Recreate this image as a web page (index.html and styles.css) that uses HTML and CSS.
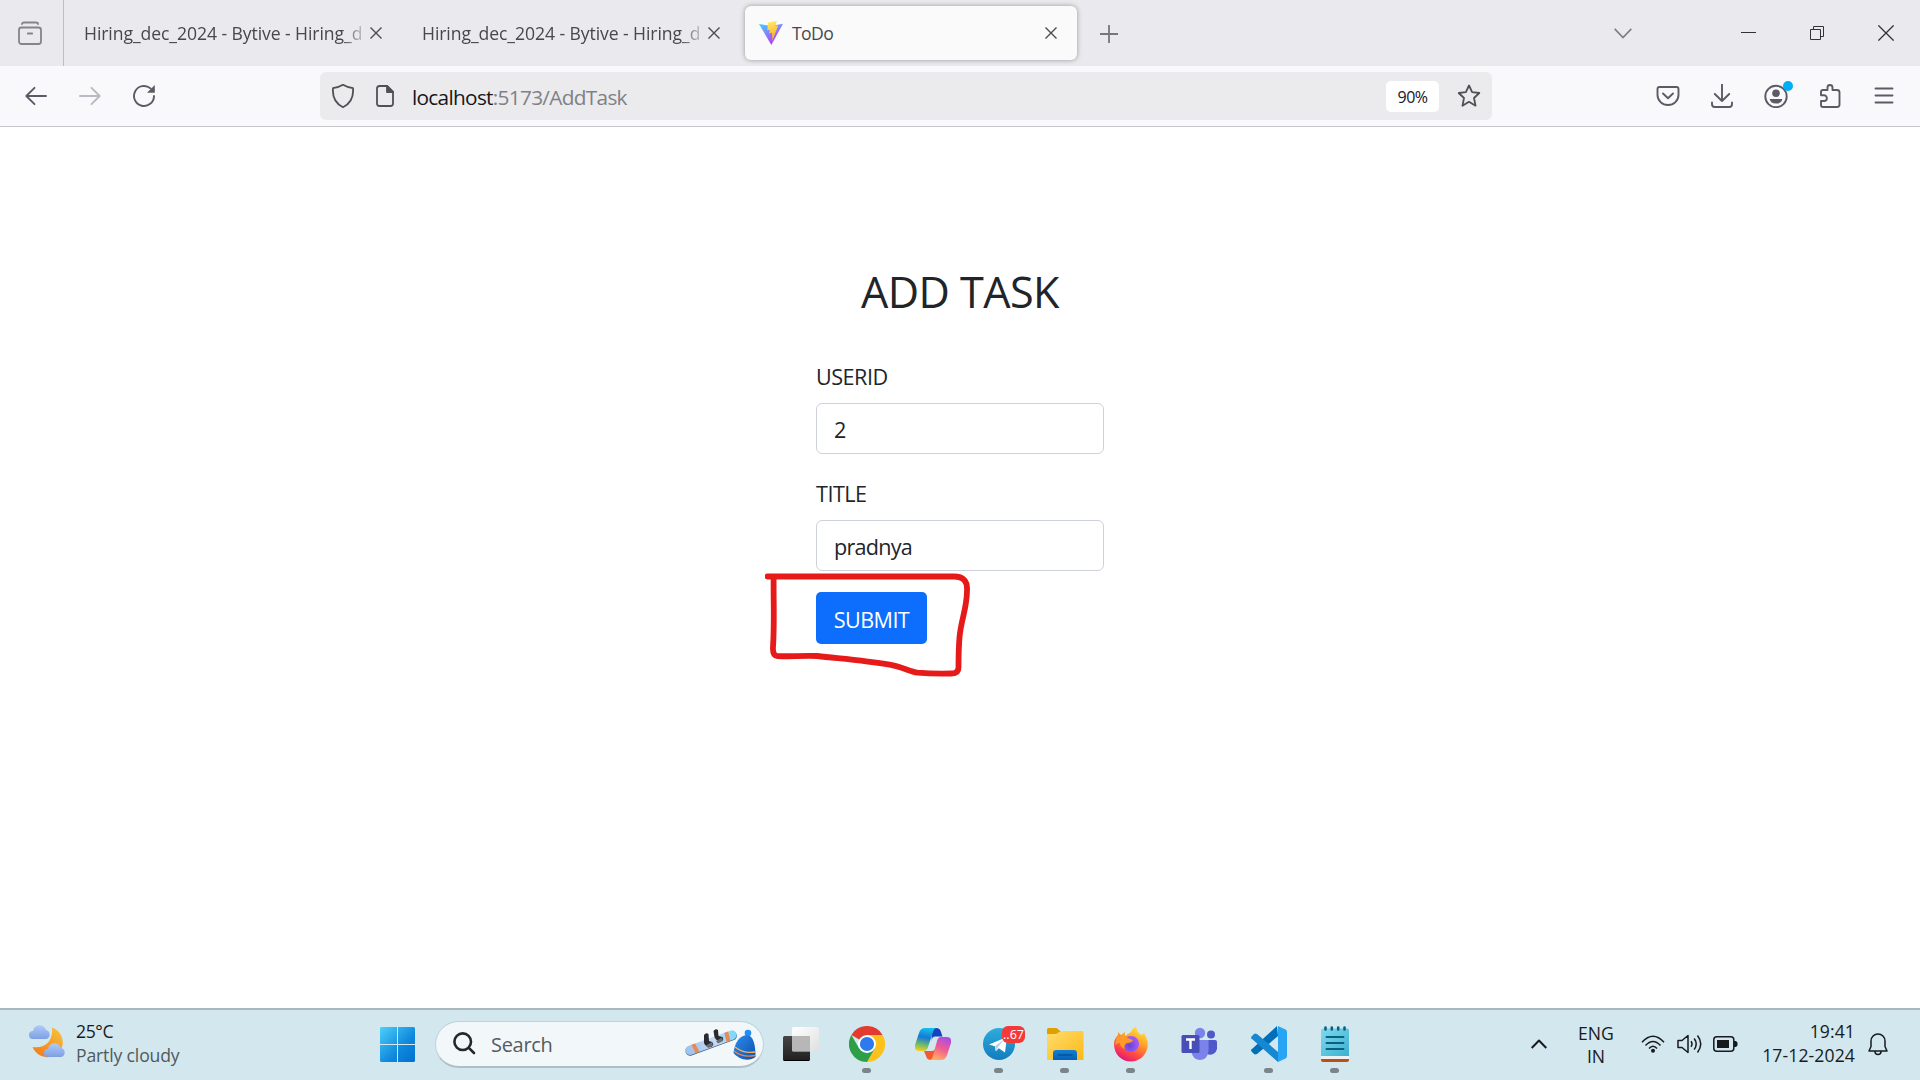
FILE: index.html
```html
<!DOCTYPE html>
<html lang="en">
<head>
<meta charset="utf-8">
<title>ToDo</title>
<link rel="stylesheet" href="styles.css">
</head>
<body>
<div class="desktop">
  <header class="tabstrip">
    <div class="recent">
      <svg width="24" height="24" viewBox="0 0 24 24" fill="none" stroke="#85848c" stroke-width="1.8" stroke-linecap="round"><path d="M4 3q0-1.500 2-1.500h12q2 0 2 1.500"/><rect x="1" y="6.500" width="22" height="16.500" rx="2.500"/><path d="M9.800 12.500h4.400"/></svg>
    </div>
    <div class="tab first">
      <span class="tab-title">Hiring_dec_2024 - Bytive - Hiring_d</span>
      <svg class="x" viewBox="0 0 12 12"><path d="M.5.5l11 11M11.500.5l-11 11"/></svg>
    </div>
    <div class="tab second">
      <span class="tab-title">Hiring_dec_2024 - Bytive - Hiring_d</span>
      <svg class="x" viewBox="0 0 12 12"><path d="M.5.5l11 11M11.500.5l-11 11"/></svg>
    </div>
    <div class="tab active">
      <svg width="24" height="24" viewBox="0 0 24 24">
        <defs>
          <linearGradient id="va" x1="0" y1="0" x2=".6" y2="1"><stop offset="0" stop-color="#41d1ff"/><stop offset="1" stop-color="#bd34fe"/></linearGradient>
          <linearGradient id="vb" x1=".4" y1="0" x2=".6" y2="1"><stop offset="0" stop-color="#ffea60"/><stop offset="1" stop-color="#ffa02c"/></linearGradient>
        </defs>
        <path fill="url(#va)" d="M0 3l12.300 2L24 2.800 12.300 24z"/>
        <path fill="url(#vb)" d="M9 1.500L18 0l-1.800 5 3-.4-5.800 15.200-.4-8-3 .6 1-3.600-2.700.5z"/>
      </svg>
      <span class="tab-title">ToDo</span>
      <svg class="x" viewBox="0 0 12 12"><path d="M.5.5l11 11M11.500.5l-11 11"/></svg>
    </div>
    <svg class="plus" width="18" height="18" viewBox="0 0 18 18"><path d="M9 0v18M0 9h18"/></svg>
    <div class="window-controls">
      <svg width="18" height="11" viewBox="0 0 18 11" stroke="#807f86" stroke-width="1.700"><path d="M.7.800L9 9.500 17.300.800"/></svg>
      <svg class="minimize" width="15" height="16" viewBox="0 0 15 16"><path d="M0 7.500h15"/></svg>
      <svg class="restore" width="14" height="14" viewBox="0 0 14 14"><path d="M.5 3.500h10v10H.5zM3.500 3V.5h10v10H11"/></svg>
      <svg width="16" height="16" viewBox="0 0 16 16" stroke-width="1.300"><path d="M.4.4l15.200 15.200M15.600.4L.4 15.600"/></svg>
    </div>
  </header>

  <nav class="toolbar">
    <div class="nav-buttons">
      <svg viewBox="0 0 24 24"><path d="M22 12H2.500M10.500 3.800L2.300 12l8.200 8.200"/></svg>
      <svg class="disabled" viewBox="0 0 24 24"><path d="M2 12h19.500M13.500 3.800l8.200 8.200-8.200 8.200"/></svg>
      <svg viewBox="0 0 24 24"><path d="M22 12a10 10 0 1 1-3.500-7.600"/><path fill="#5b5b66" stroke="none" d="M22.800 1v7.800H15z"/></svg>
    </div>
    <div class="urlbar">
      <svg width="24" height="26" viewBox="0 0 24 26"><path d="M12 1.800c3 1.800 6.500 3 10 3.300.6 7-1.200 14.800-10 19.100C3.200 19.900 1.400 12.100 2 5.100c3.500-.3 7-1.500 10-3.300z"/></svg>
      <svg class="page" width="18" height="22" viewBox="0 0 18 22"><path d="M3.500 1H11l6 6v11.500q0 2.500-2.500 2.500h-11Q1 21 1 18.500v-15Q1 1 3.500 1z"/><path fill="#505055" d="M11 1v6h6z"/></svg>
      <span class="url">localhost<span class="url-path">:5173/AddTask</span></span>
      <span class="zoom-level">90%</span>
      <svg class="star" width="24" height="24" viewBox="0 0 24 24"><path d="M12 1.500l3.100 6.700 7.200.8-5.300 5 1.500 7.700-6.500-3.900-6.500 3.900L7 14 1.700 9l7.200-.8z"/></svg>
    </div>
    <div class="actions">
      <svg viewBox="0 0 24 24"><path d="M3.500 3h17q2 0 2 2v6a10.500 10 0 0 1-21 0V5q0-2 2-2z"/><path d="M7 9.500l5 4.800 5-4.800"/></svg>
      <svg viewBox="0 0 24 24"><path d="M12 .5v16.500M4.800 10l7.200 7 7.200-7M2 18.500v1.800q0 2.700 2.700 2.700h14.600q2.700 0 2.700-2.700v-1.800"/></svg>
      <span class="account">
        <svg viewBox="0 0 24 24"><circle cx="12" cy="12.500" r="10.700"/><circle cx="12" cy="9.300" r="3.800" fill="#5b5b66" stroke="none"/><path d="M5.700 15h12.600q-.8 4.600-6.300 4.600T5.700 15z" fill="#5b5b66" stroke="none"/></svg>
        <i class="dot"></i>
      </span>
      <svg viewBox="0 0 24 24"><path d="M9.500 6V3.500a2.500 2.500 0 0 1 5 0V6H19q2.500 0 2.500 2.500v12Q21.500 23 19 23H5q-2 0-2-2v-4h3a2.800 2.800 0 0 0 0-5.700H3V8q0-2 2-2z"/></svg>
      <svg viewBox="0 0 24 24"><path d="M3.500 4.500h17M3.500 11.500h17M3.500 18.500h17"/></svg>
    </div>
  </nav>

  <main class="page-body">
    <h1 class="heading">ADD TASK</h1>
    <form class="form">
      <label class="label userid" for="userid">USERID</label>
      <input class="field" id="userid" value="2">
      <label class="label title" for="title">TITLE</label>
      <input class="field" id="title" value="pradnya">
      <button class="submit" type="button">SUBMIT</button>
    </form>
    <svg class="marker" width="210" height="110" viewBox="765 570 210 110"><path d="M767.500 576.500H954q14 0 13 14c0 18-6 29-7.500 47-1 12-1 22-1 30q0 6-7 6c-13 .3-24 0-34-.8-8-1.400-16-6-28-8-24-4.300-48-6-72-8.700-12-.7-28 .6-40 .2q-5-.4-4.500-9c1.500-24 .5-40 .6-69"/></svg>
  </main>

  <footer class="taskbar">
    <div class="weather">
      <svg width="36" height="34" viewBox="0 0 36 34">
        <defs>
          <linearGradient id="moon" x1="1" y1="0" x2=".3" y2="1"><stop offset="0" stop-color="#f8c63d"/><stop offset="1" stop-color="#f1801d"/></linearGradient>
          <linearGradient id="cloud" x1="0" y1="0" x2="0" y2="1"><stop offset="0" stop-color="#b0cbf8"/><stop offset="1" stop-color="#7d9fe5"/></linearGradient>
        </defs>
        <path fill="url(#moon)" d="M23 2.500c9 3 13 13 9.500 21C28 34 10 36.500 3.500 22c12 2 21-6 19.500-19.500z"/>
        <path fill="url(#cloud)" d="M4 14a4 4 0 0 1 0-8c1-7 11-8 13-1a4.600 4.600 0 0 1 0 9z"/>
        <path fill="url(#cloud)" d="M19 32a4 4 0 0 1 0-8c1-7 11-8 13-1a4.600 4.600 0 0 1 0 9z"/>
      </svg>
      <div class="weather-text"><span class="temp">25°C</span><span class="sky">Partly cloudy</span></div>
    </div>

    <svg class="start" width="35" height="35" viewBox="0 0 35 35">
      <defs><linearGradient id="win" gradientUnits="userSpaceOnUse" x1="0" y1="0" x2="35" y2="35"><stop offset="0" stop-color="#4bd0fc"/><stop offset=".6" stop-color="#1088dc"/><stop offset="1" stop-color="#0070d0"/></linearGradient></defs>
      <path fill="url(#win)" d="M1.500 0H17v17H0V1.500Q0 0 1.500 0zM18 0h15.500Q35 0 35 1.500V17H18zM0 18h17v17H1.500Q0 35 0 33.500zM18 18h17v15.500q0 1.500-1.500 1.500H18z"/>
    </svg>

    <div class="search">
      <svg width="23" height="23" viewBox="0 0 23 23" fill="none" stroke="#252729" stroke-width="2.600" stroke-linecap="round"><circle cx="9.700" cy="9.700" r="8.300"/><path d="M15.800 15.800l5.200 5.200"/></svg>
      <span class="search-text">Search</span>
      <svg class="winter" width="72" height="34" viewBox="0 0 72 34">
        <defs>
          <linearGradient id="hat" x1="0" y1="0" x2="1" y2="1"><stop offset="0" stop-color="#2f8df0"/><stop offset="1" stop-color="#0b50ad"/></linearGradient>
          <linearGradient id="board" x1="0" y1="0" x2="1" y2="0"><stop offset="0" stop-color="#9bc0ee"/><stop offset=".6" stop-color="#c7d9f6"/><stop offset="1" stop-color="#78d7fb"/></linearGradient>
        </defs>
        <g transform="rotate(-20 27 16)">
          <rect x="0" y="12" width="54" height="9" rx="4.500" fill="#35577e"/>
          <rect x="0" y="11" width="54" height="9.300" rx="4.600" fill="url(#board)"/>
          <path fill="#e98b50" d="M8 11h4l1 9.300H9zM43 11h4l-1 9.300h-4z"/>
        </g>
        <path fill="#282a2e" d="M20 8q2-3 4.500-1l.5 7 3 1q3 3-1 5-5 1-7-4zM29.500 4q2-3 4.500-1l.5 6 4 1q2 3-1 4-5 1-7-4z"/>
        <path fill="#6b6e74" d="M22 18.500l6-3.500 1 3.500-5 2.500zM32 14l6-3.500 1 3.500-5 2.500z"/>
        <circle cx="64" cy="6" r="3.300" fill="#218df5"/>
        <path fill="url(#hat)" d="M49.500 26c1-9 5-17 13-18 7 0 9 10 9 22-8 6-18 1-22-4z"/>
        <path fill="none" stroke="#f4b65c" stroke-width="1.300" d="M51 20q9 7 20 5"/>
        <path fill="none" stroke="#ea8450" stroke-width="1.300" d="M50 24q9 7 21 4.500"/>
      </svg>
    </div>

    <div class="apps">
      <div class="app"><svg width="36" height="36" viewBox="0 0 36 36">
        <defs><linearGradient id="tv" x1="0" y1="0" x2="0" y2="1"><stop offset="0" stop-color="#454545"/><stop offset="1" stop-color="#202020"/></linearGradient><linearGradient id="tw" x1="0" y1="0" x2="1" y2="1"><stop offset="0" stop-color="#fff"/><stop offset="1" stop-color="#dedfe0"/></linearGradient></defs>
        <rect x="0" y="10" width="27" height="25" rx="1.500" fill="url(#tv)"/><path d="M1 34.500h25" stroke="#000"/><rect x="9" y="1" width="27" height="24.500" rx="1.500" fill="url(#tw)"/><path fill="#b7b7b7" d="M9 10h18v15H9z"/></svg></div>
      <div class="app running"><svg width="36" height="36" viewBox="0 0 36 36">
        <path fill="#e33b2e" d="M18 18L2.400 9A18 18 0 0 1 33.600 9H18z"/>
        <path fill="#fcc11b" d="M18 9h15.600A18 18 0 0 1 18 36l7.800-13.500z"/>
        <path fill="#2c9f48" d="M10.200 22.500L2.400 9A18 18 0 0 0 18 36l7.800-13.500z"/>
        <circle cx="18" cy="18" r="9" fill="#fff"/><circle cx="18" cy="18" r="7.100" fill="#2f79ef"/></svg></div>
      <div class="app"><svg width="36" height="36" viewBox="0 0 36 36">
        <defs>
          <linearGradient id="ca" x1=".5" y1="0" x2=".3" y2="1"><stop offset="0" stop-color="#18bde9"/><stop offset=".4" stop-color="#1479d8"/><stop offset=".75" stop-color="#75bd65"/><stop offset="1" stop-color="#f3cf16"/></linearGradient>
          <linearGradient id="cb" x1=".8" y1="0" x2=".4" y2="1"><stop offset="0" stop-color="#a64be8"/><stop offset=".5" stop-color="#ef5b94"/><stop offset="1" stop-color="#ffad61"/></linearGradient>
        </defs>
        <path fill="#1642bd" d="M17 2h4q4 0 5 4l1.500 4.500h-7q-4 0-4 5z"/>
        <path fill="#f4582f" d="M9 25h8q3 0 4-5l-1 10-4 4q-4 0-5-4z"/>
        <path fill="url(#ca)" d="M10 2h12q-3 0-4 4l-5 15q-1 4-5 4H4q-5 0-4-6L4 7q1.500-5 6-5z"/>
        <path fill="url(#cb)" d="M26 11h6q5 0 4 6l-4 12q-1.500 5-6 5H14q3 0 4-4l4-15q1-4 4-4z"/></svg></div>
      <div class="app running telegram"><svg width="36" height="36" viewBox="0 0 36 36">
        <defs><linearGradient id="tg" x1="0" y1="0" x2="0" y2="1"><stop offset="0" stop-color="#2eacdd"/><stop offset="1" stop-color="#137cbd"/></linearGradient></defs>
        <circle cx="18" cy="18" r="16" fill="url(#tg)"/><path fill="#fff" d="M8 18.500L26 11l-2 15.500-6.200-4.300-3 3-1-5z"/><path fill="#b8d5e6" d="M14 20l9-6.500-6.500 8.500-1.700 3z"/></svg><span class="badge">..67</span></div>
      <div class="app running"><svg width="38" height="36" viewBox="0 0 38 36">
        <defs><linearGradient id="fo" x1="0" y1="0" x2="1" y2="1"><stop offset="0" stop-color="#ffdc70"/><stop offset="1" stop-color="#fdb913"/></linearGradient><linearGradient id="fb" x1="0" y1="0" x2="0" y2="1"><stop offset="0" stop-color="#127fd5"/><stop offset="1" stop-color="#0860b4"/></linearGradient></defs>
        <path fill="#dfa000" d="M1 10V3.500Q1 2 2.500 2h8l5 4v4z"/><path fill="url(#fo)" d="M1 8h9l5-3h21.500q1 0 1 1v28H1z"/><path fill="url(#fb)" d="M7 34v-7q0-3 3-3h18q3 0 3 3v7z"/><path stroke="#0a5299" stroke-width="1.500" d="M12 29h14.500"/></svg></div>
      <div class="app running"><svg width="36" height="36" viewBox="0 0 36 36">
        <defs><linearGradient id="fx" x1=".8" y1="0" x2=".3" y2="1"><stop offset="0" stop-color="#fff13d"/><stop offset=".4" stop-color="#ffa129"/><stop offset=".75" stop-color="#ff4545"/><stop offset="1" stop-color="#dc1480"/></linearGradient><radialGradient id="fp" cx=".4" cy=".6"><stop offset="0" stop-color="#6742d5"/><stop offset="1" stop-color="#9b59f8"/></radialGradient></defs>
        <path fill="url(#fx)" d="M18 6q2-4 5-6 0 5 5 9l3-2q5 8 3.500 15C32 31 25 35.500 18 35.500 8 35.500 1 28 1 18c0-4 2-7 4-9V6l3 3 4-3v4z"/><circle cx="18" cy="18" r="8" fill="url(#fp)"/><path fill="#ff9929" d="M4 11q8-2 13 2l3 1q-1 3-6 3-4 2-2 6-5-2-5-6-3 0-5 2z"/></svg></div>
      <div class="app teams"><svg width="36" height="36" viewBox="0 0 36 36">
        <circle cx="19" cy="7" r="5.200" fill="#7b83eb"/><circle cx="30" cy="8.500" r="4" fill="#5059c9"/><path fill="#5059c9" d="M24 14h10q2 0 2 2v7a7 7 0 0 1-10 5z"/><path fill="#7b83eb" d="M12 14h15.500v11q-1 9-9 9-7-1-8-8z"/><rect x=".5" y="9" width="18" height="18" rx="1.500" fill="#464eb8"/><path stroke="#fff" stroke-width="2.400" d="M5 13.500h9M9.500 13.500V23"/></svg></div>
      <div class="app running vscode"><svg width="36" height="36" viewBox="0 0 36 36">
        <path fill="#006eb8" d="M26 0L1 23q-2 1 0 3l2 2q1 .8 3 0L27 10z"/><path fill="#1688d2" d="M27 36L1 13q-2-1 0-3l2-2q1-.8 3 0l21 18z"/><path fill="#27a4f4" d="M27 0l7.500 3.500Q36 4.300 36 6v24q0 1.700-1.500 2.500L27 36z"/></svg></div>
      <div class="app running"><svg width="30" height="36" viewBox="0 0 30 36">
        <defs><linearGradient id="np" x1="0" y1="0" x2="1" y2="1"><stop offset="0" stop-color="#80d9ee"/><stop offset="1" stop-color="#3bb1d0"/></linearGradient></defs>
        <path fill="#b95015" d="M1 31h28v3q0 2-2 2H3q-2 0-2-2z"/><path fill="#eef1f2" d="M1 29h28v4H1z"/><path fill="url(#np)" d="M3 2.500h24q2 0 2 2V30H1V4.500q0-2 2-2z"/><path stroke="#09617f" stroke-width="2.600" stroke-linecap="round" d="M5.500 1.500V3.500M11.800 1.500V3.500M18.200 1.500V3.500M24.500 1.500V3.500"/><path stroke="#09617f" stroke-width="1.900" stroke-linecap="round" d="M6.500 11h17M6.500 17h17M6.500 23h17"/></svg></div>
    </div>

    <div class="tray">
      <svg class="up" width="16" height="10" viewBox="0 0 16 10"><path stroke-width="2" d="M.7 9L8 1.500 15.300 9"/></svg>
      <div class="language"><span class="eng">ENG</span><span>IN</span></div>
      <svg class="wifi" width="24" height="18" viewBox="0 0 24 18"><path d="M1 7.200q11-12 22 0M4.500 10.500q7.500-8 15 0M8 13.500q4-4.500 8 0"/><circle cx="12" cy="15.800" r="2" fill="#171b1d" stroke="none"/></svg>
      <svg class="volume" width="25" height="20" viewBox="0 0 25 20"><path d="M1 6.500h4l6-5v17l-6-5H1zM14 7.200q2 2.800 0 5.600M17.200 4.500q4 5.500 0 11M20.500 1.500q6.500 8.500 0 17"/></svg>
      <svg class="battery" width="25" height="16" viewBox="0 0 25 16"><rect x=".8" y=".8" width="20" height="14.400" rx="3"/><path fill="#171b1d" stroke="none" d="M4 4h12v8H4zM21 5h2l1.500 1.500v3L23 11h-2z"/></svg>
      <div class="clock"><span class="time">19:41</span><span class="date">17-12-2024</span></div>
      <svg class="bell" width="20" height="23" viewBox="0 0 20 23"><path d="M10 1a7 7 0 0 1 7 7v5.500l2 4.500H1l2-4.500V8a7 7 0 0 1 7-7zM7 18.500a3 3 0 0 0 6 0"/></svg>
    </div>
  </footer>
</div>
</body>
</html>
```
FILE: styles.css
```css
* { box-sizing: border-box; }
body {
  margin: 0;
  font-family: "Open Sans", "Noto Sans", sans-serif;
  font-size: 17.6px;
  color: #212529;
  overflow: hidden;
}
svg { display: block; flex: none; }
.desktop {
  width: 1920px;
  height: 1080px;
  display: grid;
  grid-template-rows: 66px 61px 881px 72px;
  background: #fff;
}

/* Tab strip */
.tabstrip {
  display: flex;
  align-items: center;
  background: #eae9ee;
  color: #48474e;
}
.recent {
  width: 64px;
  height: 66px;
  display: flex;
  align-items: center;
  padding-left: 18px;
  border-right: 1px solid #bebdc3;
}
.tab {
  display: flex;
  align-items: center;
  height: 54px;
  white-space: nowrap;
}
.tab-title {
  line-height: 30px;
  letter-spacing: -0.08px;
  padding-bottom: 1px;
}
.tab .x {
  width: 12px;
  height: 12px;
  fill: none;
  stroke: #4c4b52;
  stroke-width: 1.4;
}
.first { width: 318px; margin-left: 20px; gap: 5px; }
.second { width: 298px; margin-left: 20px; gap: 5px; }
.first .tab-title, .second .tab-title {
  width: 281px;
  -webkit-mask-image: linear-gradient(90deg, #000 258px, transparent 285px);
  mask-image: linear-gradient(90deg, #000 258px, transparent 285px);
}
.active {
  width: 332px;
  margin-left: 25px;
  padding: 0 20px 0 14px;
  gap: 9px;
  border-radius: 6px;
  background: #fafafb;
  box-shadow: 0 0 5px rgba(0, 0, 0, .36);
}
.active .tab-title { flex: 1; letter-spacing: -0.6px; }
.plus {
  margin: 2px 0 0 23px;
  stroke: #77767d;
  stroke-width: 1.8;
}
.window-controls {
  margin-left: auto;
  margin-right: 26px;
  display: flex;
  align-items: center;
  fill: none;
  stroke: #333238;
}
.minimize { margin-left: 109px; }
.restore { margin: 0 54px; }

/* Toolbar */
.toolbar {
  display: flex;
  align-items: center;
  padding-left: 9px;
  background: #f9f9fb;
  border-bottom: 1px solid #c6c5ca;
}
.nav-buttons, .actions {
  display: flex;
  fill: none;
  stroke: #5b5b66;
  stroke-width: 1.9;
  stroke-linecap: round;
  stroke-linejoin: round;
}
.nav-buttons svg, .actions svg { width: 24px; height: 24px; }
.nav-buttons > svg { margin: 0 15px; }
.nav-buttons .disabled { stroke: #bbbac0; }
.actions { gap: 30px; margin-left: 164px; }
.account { position: relative; }
.dot {
  position: absolute;
  right: -5px;
  top: -3px;
  width: 10px;
  height: 10px;
  border-radius: 50%;
  background: #00adf8;
}
.urlbar {
  width: 1172px;
  height: 48px;
  margin-left: 149px;
  padding-left: 11px;
  display: flex;
  align-items: center;
  background: #ebebed;
  border-radius: 6px;
  fill: none;
  stroke: #505055;
  stroke-width: 1.8;
  stroke-linejoin: round;
}
.page { margin-left: 21px; }
.url {
  margin-left: 18px;
  padding-top: 2px;
  flex: 1;
  font-size: 20.8px;
  letter-spacing: -0.7px;
  color: #17161c;
}
.url-path { color: #818086; }
.zoom-level {
  width: 53px;
  height: 31px;
  line-height: 32px;
  border-radius: 5px;
  background: #fff;
  color: #17161c;
  font-size: 16px;
  letter-spacing: -0.5px;
  text-align: center;
}
.star { margin: 0 11px 0 18px; }

/* Page */
.page-body {
  position: relative;
  padding-top: 139px;
}
.heading {
  margin: 0 0 43px;
  font-size: 43.200px;
  font-weight: 400;
  line-height: 52px;
  letter-spacing: -0.55px;
  text-align: center;
}
.form {
  width: 288px;
  margin: 0 auto;
  display: flex;
  flex-direction: column;
  align-items: flex-start;
  font-size: 21.6px;
}
.label { line-height: 32px; margin-bottom: 10px; letter-spacing: -0.5px; }
.field {
  width: 288px;
  height: 51px;
  margin-bottom: 24px;
  padding: 2px 17px 0;
  border: 1px solid #ced2da;
  border-radius: 6px;
  background: #fff;
  color: #212529;
  font: inherit;
  letter-spacing: -0.75px;
}
.submit {
  width: 111px;
  height: 52px;
  margin-top: -3px;
  padding: 3px 0 0;
  border: 0;
  border-radius: 5px;
  background: #0d6efd;
  color: #fff;
  font: inherit;
  letter-spacing: -0.6px;
}
.marker {
  position: absolute;
  left: 765px;
  top: 443px;
  fill: none;
  stroke: #e71a1a;
  stroke-width: 5.800;
  stroke-linecap: round;
  stroke-linejoin: round;
}

/* Taskbar */
.taskbar {
  display: flex;
  align-items: center;
  padding-bottom: 2px;
  background: #d3e7ee;
  border-top: 2px solid #a9b7be;
  color: #171b1d;
}
.weather {
  width: 351px;
  margin-left: 29px;
  display: flex;
  align-items: center;
  gap: 11px;
}
.weather svg { margin-bottom: 4px; }
.weather-text, .language, .clock {
  display: flex;
  flex-direction: column;
  line-height: 24px;
}
.weather-text, .clock { margin-bottom: 3px; }
.temp { letter-spacing: -0.4px; }
.sky { letter-spacing: -0.15px; color: #50595d; }
.search {
  width: 329px;
  height: 47px;
  margin: 0 19px 0 20px;
  padding: 0 7px 0 17px;
  display: flex;
  align-items: center;
  border: 1px solid #c0d2d9;
  border-bottom: 2px solid #aebfc5;
  border-radius: 24px;
  background: #f2f7fa;
}
.search-text {
  flex: 1;
  margin-left: 15px;
  padding-top: 2px;
  font-size: 20px;
  letter-spacing: -0.3px;
  color: #565b5e;
}
.apps { display: flex; margin-left: -15px; }
.app {
  position: relative;
  width: 66px;
  height: 68px;
  display: flex;
  align-items: center;
  justify-content: center;
}
.running::after {
  content: "";
  position: absolute;
  left: 28px;
  bottom: 5px;
  width: 9px;
  height: 5px;
  border-radius: 3px;
  background: #7b8487;
}
.badge {
  position: absolute;
  left: 36px;
  top: 16px;
  width: 23px;
  height: 17px;
  border-radius: 6px;
  background: #f33a38;
  color: #fff;
  font-size: 12.5px;
  line-height: 17px;
  text-align: center;
}
.teams { margin-left: 2px; }
.vscode { margin-left: 4px; }
.tray {
  margin-left: auto;
  margin-right: 32px;
  display: flex;
  align-items: center;
  fill: none;
  stroke: #171b1d;
  stroke-width: 1.5;
  stroke-linejoin: round;
}
.language {
  width: 36px;
  margin-left: 31px;
  margin-top: 2px;
  line-height: 23px;
  align-items: center;
}
.wifi { margin-left: 27px; }
.volume { margin-left: 12px; }
.battery { margin-left: 11px; }
.clock {
  width: 93px;
  margin-left: 24px;
  align-items: flex-end;
  letter-spacing: 0.1px;
  white-space: nowrap;
}
.bell { margin-left: 13px; }
```
